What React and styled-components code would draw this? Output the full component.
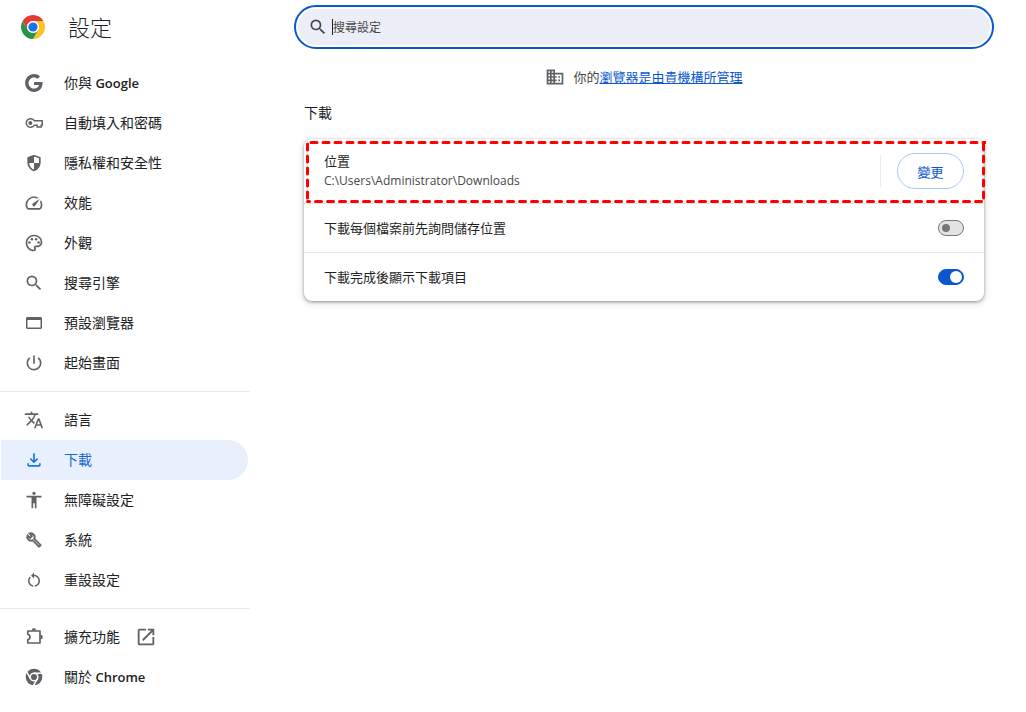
import { useState } from "react"
import styled, { createGlobalStyle } from "styled-components"
import {
    MdAccessibility,
    MdDomain,
    MdOpenInNew,
    MdOutlineBuild,
    MdOutlinePalette,
    MdOutlineSpeed,
    MdPowerSettingsNew,
    MdRestartAlt,
    MdSearch,
    MdTranslate,
} from "react-icons/md"

const mainMenu = [
    { id: "people", name: "你與", brand: "Google", Icon: GoogleIcon },
    { id: "autofill", name: "自動填入和密碼", Icon: KeyIcon },
    { id: "privacy", name: "隱私權和安全性", Icon: ShieldIcon },
    { id: "performance", name: "效能", Icon: MdOutlineSpeed },
    { id: "appearance", name: "外觀", Icon: MdOutlinePalette },
    { id: "search", name: "搜尋引擎", Icon: MdSearch },
    { id: "defaultBrowser", name: "預設瀏覽器", Icon: WindowIcon },
    { id: "onStartup", name: "起始畫面", Icon: MdPowerSettingsNew },
]

const advancedMenu = [
    { id: "languages", name: "語言", Icon: MdTranslate },
    { id: "downloads", name: "下載", Icon: DownloadIcon },
    { id: "accessibility", name: "無障礙設定", Icon: MdAccessibility },
    { id: "system", name: "系統", Icon: MdOutlineBuild, iconSize: 16, bold: true },
    { id: "reset", name: "重設設定", Icon: MdRestartAlt, iconSize: 18 },
]

const footerMenu = [
    { id: "extensions", name: "擴充功能", Icon: ExtensionIcon, external: true },
    { id: "help", name: "關於", brand: "Chrome", Icon: ChromeIcon },
]

export default function App() {
    const [askFirst, setAskFirst] = useState(false)
    const [showDone, setShowDone] = useState(true)

    return (
        <>
            <GlobalStyle />
            <Page>
                <Sidebar>
                    <Brand>
                        <ChromeLogo />
                        <h1>設定</h1>
                    </Brand>
                    <nav>
                        <Menu items={mainMenu} />
                        <Separator />
                        <Menu items={advancedMenu} />
                        <Separator />
                        <Menu items={footerMenu} />
                    </nav>
                </Sidebar>
                <Main>
                    <SearchBox>
                        <MdSearch size={20} />
                        <Caret />
                        <input type="text" aria-label="搜尋設定" placeholder="搜尋設定" />
                    </SearchBox>
                    <Notice>
                        <MdDomain size={20} />
                        <p>你的<a href="#management">瀏覽器是由貴機構所管理</a></p>
                    </Notice>
                    <Section>
                        <h2>下載</h2>
                        <Card>
                            <LocationRow>
                                <div>
                                    <p>位置</p>
                                    <Path>C:\Users\Administrator\Downloads</Path>
                                </div>
                                <ChangeArea>
                                    <ChangeButton type="button">變更</ChangeButton>
                                </ChangeArea>
                                <Highlight />
                            </LocationRow>
                            <ToggleRow>
                                <span>下載每個檔案前先詢問儲存位置</span>
                                <Toggle type="checkbox" checked={askFirst} onChange={() => setAskFirst(!askFirst)} />
                            </ToggleRow>
                            <ToggleRow>
                                <span>下載完成後顯示下載項目</span>
                                <Toggle type="checkbox" checked={showDone} onChange={() => setShowDone(!showDone)} />
                            </ToggleRow>
                        </Card>
                    </Section>
                </Main>
            </Page>
        </>
    )
}

function Menu({ items }) {
    return items.map(({ id, name, brand, Icon, iconSize = 20, bold, external }) => (
        <MenuLink key={id} href={`#${id}`} $active={id === "downloads"}>
            <IconSlot $bold={bold}><Icon size={iconSize} /></IconSlot>
            <span>{name}{brand && <b> {brand}</b>}</span>
            {external && <MdOpenInNew size={22} />}
        </MenuLink>
    ))
}

function Highlight() {
    return (
        <DashedFrame>
            <svg width="100%" height="100%" fill="none" stroke="#ff0000" strokeWidth="3" strokeLinecap="round" strokeDasharray="6 6">
                <line x1="5" y1="1.5" x2="100%" y2="1.5" />
                <line x1="1.5" y1="3" x2="1.5" y2="60" />
                <line x1="1.5" y1="60.5" x2="100%" y2="60.5" strokeDashoffset="4" />
                <svg x="100%" overflow="visible">
                    <line x1="-2.5" y1="3" x2="-2.5" y2="60" />
                </svg>
            </svg>
        </DashedFrame>
    )
}

function ChromeLogo() {
    return (
        <svg width="24" height="24" viewBox="0 0 24 24">
            <path fill="#e33b2e" d="M12 6h10.39A12 12 0 0 0 1.61 6L6.8 15A6 6 0 0 1 12 6z" />
            <path fill="#fcc31e" d="M22.39 6A12 12 0 0 1 12 24l5.2-9A6 6 0 0 0 12 6z" />
            <path fill="#269547" d="M1.61 6A12 12 0 0 0 12 24l5.2-9A6 6 0 0 1 6.8 15z" />
            <circle cx="12" cy="12" r="5.8" fill="#fff" />
            <circle cx="12" cy="12" r="4.6" fill="#1a73e8" />
        </svg>
    )
}

function GoogleIcon({ size }) {
    return (
        <svg width={size} height={size} viewBox="1 1 18 18" fill="currentColor">
            <path d="M17.58 9H10v2.75h4.47c-.24 1.2-1.42 3.27-4.47 3.27-2.72 0-4.93-2.25-4.93-5.02S7.28 4.98 10 4.98c1.54 0 2.57.66 3.17 1.22l2.19-2.12C13.97 2.79 12.16 2 10 2c-4.42 0-8 3.58-8 8s3.58 8 8 8c4.62 0 7.68-3.25 7.68-7.82 0-.46-.04-.83-.1-1.18z" />
        </svg>
    )
}

function KeyIcon({ size }) {
    return (
        <svg width={size} height={size} viewBox="0 0 20 20">
            <g fill="none" stroke="currentColor" strokeWidth="1.5">
                <path d="M10.2 7.7A4.3 4.3 0 1 0 10.2 12.300h3V14h4V12.300h1V7.700z" />
            </g>
            <circle cx="6.300" cy="10" r="2" fill="currentColor" />
        </svg>
    )
}

function ShieldIcon({ size }) {
    return (
        <svg width={size} height={size} viewBox="0 0 24 24" fill="currentColor">
            <path fillRule="evenodd" d="M12 2L4 5v6.1c0 5 3.4 9.7 8 10.9 4.6-1.2 8-5.9 8-10.9V5l-8-3zM12 4.1l6 2.3V12h-6V4.1zM12 12v7.9C8.9 18.9 6.5 15.7 6.1 12H12z" />
        </svg>
    )
}

function WindowIcon({ size }) {
    return (
        <svg width={size} height={size} viewBox="0 0 20 20" fill="currentColor">
            <path fillRule="evenodd" d="M3.5 4h13c.8 0 1.5.7 1.5 1.5v9c0 .8-.7 1.5-1.5 1.5h-13c-.8 0-1.5-.7-1.5-1.5v-9c0-.8.7-1.5 1.5-1.5zM3.500 7v7.5h13V7z" />
        </svg>
    )
}

function DownloadIcon({ size }) {
    return (
        <svg width={size} height={size} viewBox="0 0 24 24" fill="currentColor">
            <path d="M12 16l-5-5 1.4-1.4 2.6 2.55V4h2v8.15l2.6-2.55L17 11l-5 5zM6 20c-1.1 0-2-.9-2-2v-2h2v2h12v-2h2v2c0 1.1-.9 2-2 2H6z" />
        </svg>
    )
}

function ExtensionIcon({ size }) {
    return (
        <svg width={size} height={size} viewBox="0 0 20 20">
            <path fill="none" stroke="currentColor" strokeWidth="1.7" strokeLinejoin="round" d="M3.8 4H16v12H3.8v-3.2a2.9 2.9 0 0 0 0-5.6z" />
            <path fill="currentColor" d="M7.6 3.5a2.3 2.3 0 0 1 4.6 0zM16.5 7.7a2.3 2.3 0 0 1 0 4.6z" />
        </svg>
    )
}

function ChromeIcon({ size }) {
    return (
        <svg width={size} height={size} viewBox="0 0 24 24">
            <circle cx="12" cy="12" r="10" fill="currentColor" />
            <g fill="none" stroke="#fff" strokeWidth="1.8">
                <circle cx="12" cy="12" r="4.6" />
                <path d="M12 7.4h10M8 14.300l-5-8.700M16 14.300l-5 8.700" />
            </g>
        </svg>
    )
}

const GlobalStyle = createGlobalStyle`
    * {
        box-sizing: border-box;
    }
    body {
        margin: 0;
        background: #fff;
        color: #1f1f1f;
        font-family: "Open Sans", "Noto Sans CJK TC", sans-serif;
        font-size: 13px;
        line-height: 20px;
    }
    h1, h2, p {
        margin: 0;
        font-weight: 400;
    }
    svg {
        display: block;
        flex-shrink: 0;
    }
`

const Page = styled.div`
    display: flex;
    align-items: flex-start;
`

const Sidebar = styled.aside`
    width: 250px;
    flex-shrink: 0;
`

const Brand = styled.div`
    display: flex;
    align-items: center;
    gap: 23px;
    height: 54px;
    margin-bottom: 9px;
    padding-left: 21px;
    h1{
        font-size: 22px;
        font-weight: 300;
        line-height: 32px;
    }
`

const MenuLink = styled.a`
    display: flex;
    align-items: center;
    height: 40px;
    margin: 0 2px 0 1px;
    padding-left: 23px;
    border-radius: 0 20px 20px 0;
    font-size: 14px;
    text-decoration: none;
    color: ${({ $active }) => ($active ? "#1967d2" : "#202124")};
    background-color: ${({ $active }) => ($active ? "#e8f0fe" : "transparent")};
    b{
        font-size: 13px;
        font-weight: 600;
    }
    svg{
        color: ${({ $active }) => ($active ? "#1a73e8" : "#5f6368")};
    }
    span + svg{
        margin-left: 15px;
    }
`

const IconSlot = styled.i`
    display: flex;
    justify-content: center;
    width: 20px;
    margin-right: 20px;
    path:not([fill="none"]){
        ${({ $bold }) => $bold && "stroke-width: 1px;"}
    }
`

const Separator = styled.hr`
    height: 1px;
    margin: 8px 0;
    border: 0;
    background-color: #e8eaed;
`

const Main = styled.main`
    flex: 1;
    display: flex;
    flex-direction: column;
    align-items: center;
    min-width: 0;
    margin-left: 12px;
    padding: 5px 32px 32px;
`

const SearchBox = styled.div`
    display: flex;
    align-items: center;
    width: 100%;
    max-width: 700px;
    height: 44px;
    padding: 0 14px 0 12px;
    border: 2px solid #0b57d0;
    border-radius: 22px;
    background-color: #ebeef7;
    box-shadow: inset 0 0 0 2px #fff;
    svg{
        color: #474747;
    }
    input{
        flex: 1;
        min-width: 0;
        padding: 0;
        border: 0;
        outline: none;
        background: transparent;
        color: #1f1f1f;
        font-family: inherit;
        font-size: 12px;
    }
    input::placeholder{
        color: #474747;
        opacity: 1;
    }
`

const Caret = styled.span`
    width: 1px;
    height: 16px;
    margin-left: 4px;
    background-color: #1f1f1f;
`

const Notice = styled.div`
    display: flex;
    align-items: center;
    gap: 8px;
    height: 20px;
    margin: 18px 0 16px;
    color: #474747;
    svg{
        color: #5f6368;
    }
    a{
        color: #0b57d0;
    }
`

const Section = styled.section`
    width: 100%;
    max-width: 680px;
    h2{
        margin-bottom: 16px;
        font-size: 14px;
    }
`

const Card = styled.div`
    border-radius: 8px;
    background-color: #fff;
    box-shadow: 0 1px 3px rgba(60, 64, 67, 0.5), 0 2px 6px 1px rgba(60, 64, 67, 0.15);
`

const LocationRow = styled.div`
    position: relative;
    display: flex;
    align-items: center;
    justify-content: space-between;
    height: 64px;
    padding: 0 20px;
`

const Path = styled.p`
    color: #474747;
    font-size: 12px;
`

const ChangeArea = styled.div`
    display: flex;
    align-items: center;
    padding-left: 16px;
    border-left: 1px solid #e8eaed;
    height: 32px;
`

const ChangeButton = styled.button`
    min-width: 67px;
    height: 36px;
    padding: 0 16px;
    border: 1px solid #a8c7fa;
    border-radius: 18px;
    background-color: #fff;
    color: #0b57d0;
    font-family: inherit;
    font-size: 13px;
`

const DashedFrame = styled.div`
    position: absolute;
    inset: 2px -2px 0 2px;
    pointer-events: none;
`

const ToggleRow = styled.label`
    display: flex;
    align-items: center;
    justify-content: space-between;
    height: 49px;
    padding: 0 20px;
    border-top: 1px solid #e8eaed;
`

const Toggle = styled.input`
    appearance: none;
    display: flex;
    align-items: center;
    width: 26px;
    height: 16px;
    margin: 0;
    padding: 0 3px;
    border: 1px solid #747775;
    border-radius: 8px;
    background-color: #e3e3e3;
    &::before{
        content: "";
        width: 8px;
        height: 8px;
        border-radius: 50%;
        background-color: #747775;
    }
    &:checked{
        justify-content: flex-end;
        padding: 0 1px;
        border-color: #0b57d0;
        background-color: #0b57d0;
    }
    &:checked::before{
        width: 12px;
        height: 12px;
        background-color: #fff;
    }
`
